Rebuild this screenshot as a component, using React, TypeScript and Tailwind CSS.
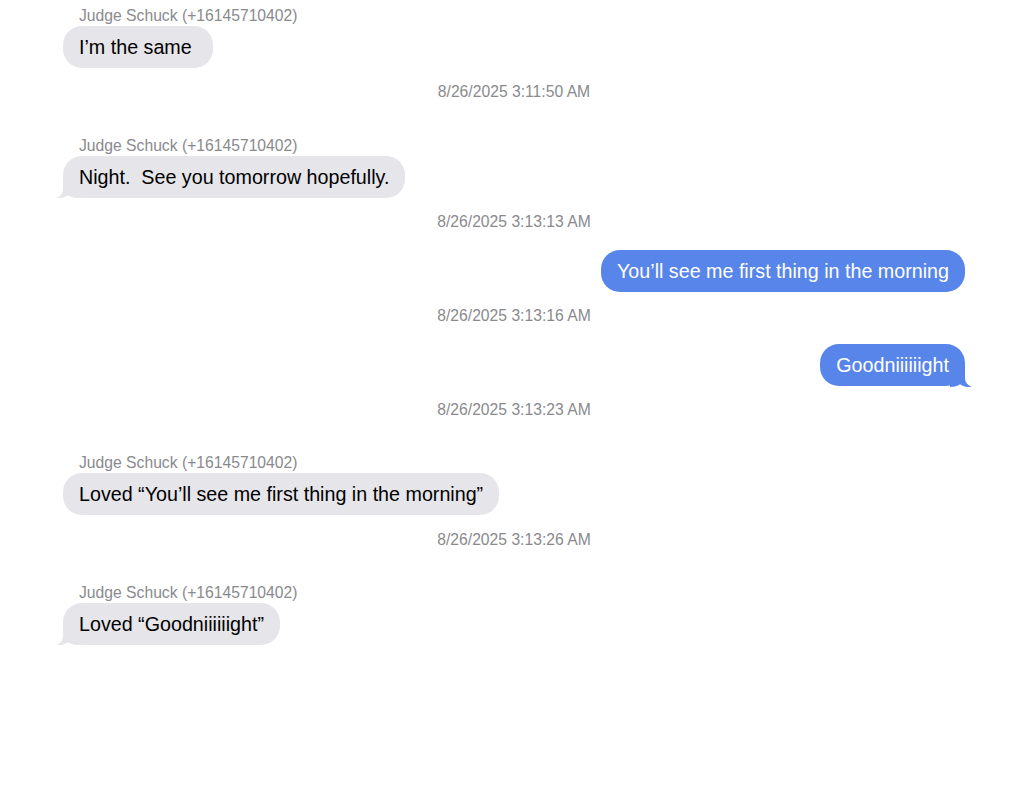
import React from "react";

type Msg =
  | { kind: "in"; text: string; tail: boolean; mt: string }
  | { kind: "out"; text: string; tail: boolean; mt: string }
  | { kind: "ts"; text: string; mt: string };

const SENDER = "Judge Schuck (+16145710402)";

const items: Msg[] = [
  { kind: "in", text: "I\u2019m the same\u00a0", tail: false, mt: "mt-0" },
  { kind: "ts", text: "8/26/2025 3:11:50 AM", mt: "mt-[15px]" },
  { kind: "in", text: "Night.\u00a0 See you tomorrow hopefully.", tail: true, mt: "mt-[36px]" },
  { kind: "ts", text: "8/26/2025 3:13:13 AM", mt: "mt-[15px]" },
  { kind: "out", text: "You\u2019ll see me first thing in the morning", tail: false, mt: "mt-[19px]" },
  { kind: "ts", text: "8/26/2025 3:13:16 AM", mt: "mt-[15px]" },
  { kind: "out", text: "Goodniiiiiight", tail: true, mt: "mt-[19px]" },
  { kind: "ts", text: "8/26/2025 3:13:23 AM", mt: "mt-[15px]" },
  { kind: "in", text: "Loved \u201cYou\u2019ll see me first thing in the morning\u201d", tail: false, mt: "mt-[35px]" },
  { kind: "ts", text: "8/26/2025 3:13:26 AM", mt: "mt-[16px]" },
  { kind: "in", text: "Loved \u201cGoodniiiiiight\u201d", tail: true, mt: "mt-[35px]" },
];

function TailIn() {
  return (
    <svg className="absolute left-[-6px] bottom-0" width="22" height="20" viewBox="0 0 22 20">
      <path
        d="M6 0 L6 11 C6 15 4 18 0 20 C4.5 20.4 8.5 19.2 11 17.2 C13.5 19 17 20 22 20 L22 0 Z"
        fill="#e5e5ea"
      />
    </svg>
  );
}

function TailOut() {
  return (
    <svg className="absolute right-[-7px] bottom-[-1px]" width="22" height="20" viewBox="0 0 22 20">
      <path
        d="M15 0 L15 11 C15 15 17 18 22 20 C16.5 20.4 12.5 19.2 10 17.2 C7.5 19 5 20 0 20 L0 0 Z"
        fill="#5885e9"
      />
    </svg>
  );
}

export default function App() {
  return (
    <div
      className="w-[1024px] h-[805px] bg-white pl-[63px] pr-[59px] pt-[7px] flex flex-col"
      style={{ fontFamily: '"Liberation Sans", Arial, Helvetica, sans-serif' }}
    >
      {items.map((m, i) => {
        if (m.kind === "ts") {
          return (
            <div
              key={i}
              className={`${m.mt} text-center text-[15.7px] leading-[18px] text-[#8a8a8e]`}
            >
              {m.text}
            </div>
          );
        }
        if (m.kind === "in") {
          return (
            <div key={i} className={`flex flex-col items-start ${m.mt}`}>
              <div className="pl-4 text-[15.7px] leading-[18px] text-[#8a8a8e]">{SENDER}</div>
              <div className="relative mt-[1px]">
                {m.tail && <TailIn />}
                <div className="relative rounded-[19px] bg-[#e5e5ea] px-4 py-[10px] text-[19.7px] leading-[22px] text-black">
                  {m.text}
                </div>
              </div>
            </div>
          );
        }
        return (
          <div key={i} className={`${m.mt} flex justify-end`}>
            <div className="relative">
              {m.tail && <TailOut />}
              <div className="relative rounded-[19px] bg-[#5885e9] px-4 py-[10px] text-[19.7px] leading-[22px] text-white">
                {m.text}
              </div>
            </div>
          </div>
        );
      })}
    </div>
  );
}
